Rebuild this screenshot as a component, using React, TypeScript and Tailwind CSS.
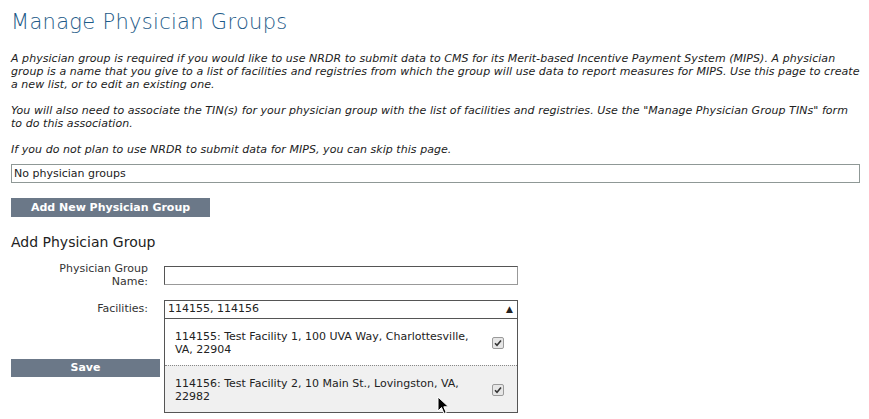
import React from 'react';

const font = { fontFamily: '"DejaVu Sans", Verdana, sans-serif' };

function Check() {
  return (
    <span className="flex h-[12px] w-[12px] items-center justify-center rounded-[2px] border border-[#9a9a9a] bg-[#e6e6e6]">
      <svg width="8" height="8" viewBox="0 0 8 8">
        <path d="M1 4.2 L3 6.2 L7 1.5" fill="none" stroke="#333" strokeWidth="1.6" />
      </svg>
    </span>
  );
}

function Cursor() {
  return (
    <svg className="absolute left-[272px] top-[77px]" width="14" height="20" viewBox="0 0 14 20">
      <path d="M1 1 L1 15 L4.5 11.5 L7 17.5 L9.2 16.5 L6.8 10.8 L11.5 10.8 Z" fill="#000" stroke="#fff" strokeWidth="1" />
    </svg>
  );
}

export default function App() {
  return (
    <div className="min-h-[419px] w-[869px] bg-white px-[11px] pt-[9px] text-[11px] text-[#222]" style={font}>
      <h1
        className="text-[21px] leading-[26px] tracking-[0.3px] text-[#1d5a88]"
        style={{ fontFamily: '"DejaVu Sans", sans-serif', fontWeight: 200 }}
      >
        Manage Physician Groups
      </h1>

      <div className="mt-[17px] w-[849px] italic leading-[13px] tracking-[0.05px]">
        <p>
          A physician group is required if you would like to use NRDR to submit data to CMS for its Merit-based Incentive Payment System (MIPS). A physician group is a name that you give to a list of facilities and registries from which the group will use data to report measures for MIPS. Use this page to create a new list, or to edit an existing one.
        </p>
        <p className="mt-[13px]">
          You will also need to associate the TIN(s) for your physician group with the list of facilities and registries. Use the "Manage Physician Group TINs" form to do this association.
        </p>
        <p className="mt-[13px]">If you do not plan to use NRDR to submit data for MIPS, you can skip this page.</p>
      </div>

      <div className="mt-[8px] h-[19px] w-[849px] border border-[#8f9896] px-[2px] leading-[17px]">No physician groups</div>

      <button className="mt-[15px] h-[19px] w-[199px] bg-[#6b7888] text-[11px] font-bold leading-[19px] text-white">
        Add New Physician Group
      </button>

      <h2 className="mt-[16px] text-[14px] leading-[18px] text-[#222]">Add Physician Group</h2>

      <div className="mt-[11px] flex">
        <label className="w-[137px] pl-[32px] text-right leading-[13px] text-[#333]">Physician Group Name:</label>
        <input className="ml-[16px] mt-[4px] h-[19px] w-[354px] border border-[#555] border-b-[#999] border-r-[#999] outline-none" />
      </div>

      <div className="relative mt-[12px] flex">
        <label className="w-[137px] pt-[2px] text-right leading-[13px] text-[#333]">Facilities:</label>
        <div className="relative ml-[16px] w-[354px]">
          <div className="flex h-[19px] items-center justify-between border border-[#555] pl-[3px] pr-[4px]">
            <span>114155, 114156</span>
            <span className="text-[9px] leading-none text-[#222]">▲</span>
          </div>
          <div className="absolute left-0 top-[18px] z-10 w-[354px] border border-[#555] bg-white">
            <div className="flex items-center justify-between pb-[9px] pl-[10px] pr-[13px] pt-[11px] leading-[13px]">
              <span className="w-[305px]">114155: Test Facility 1, 100 UVA Way, Charlottesville, VA, 22904</span>
              <Check />
            </div>
            <div className="flex items-center justify-between border-t border-dotted border-[#888] bg-[#f0f0f0] pb-[9px] pl-[10px] pr-[13px] pt-[11px] leading-[13px]">
              <span className="w-[305px]">114156: Test Facility 2, 10 Main St., Lovingston, VA, 22982</span>
              <Check />
            </div>
            <Cursor />
          </div>
        </div>
      </div>

      <button className="mt-[40px] h-[18px] w-[149px] bg-[#6b7888] text-[11px] font-bold leading-[18px] text-white">
        Save
      </button>
    </div>
  );
}
